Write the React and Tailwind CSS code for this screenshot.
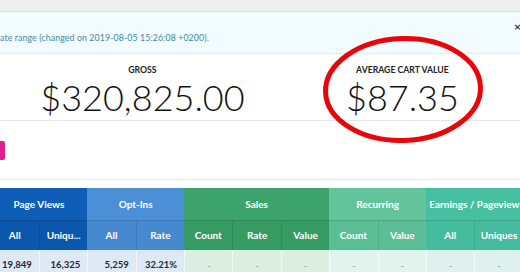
const groups = [
    { label: 'Page Views', head: 'bg-[#0e5eb7]', sub: 'bg-[#0b57ab]', cell: 'bg-[#dee9f5]', cols: ['All', 'Uniqu...'] },
    { label: 'Opt-Ins', head: 'bg-[#4b8fd6]', sub: 'bg-[#4789d0]', cell: 'bg-[#dee9f5]', cols: ['All', 'Rate'] },
    { label: 'Sales', head: 'bg-[#3ba36b]', sub: 'bg-[#369b63]', cell: 'bg-[#dbefe2]', cols: ['Count', 'Rate', 'Value'] },
    { label: 'Recurring', head: 'bg-[#63c49c]', sub: 'bg-[#5cbe96]', cell: 'bg-[#e1f3ed]', cols: ['Count', 'Value'] },
    { label: 'Earnings / Pageview', head: 'bg-[#46c0a0]', sub: 'bg-[#43bb9c]', cell: 'bg-[#dff1ec]', cols: ['All', 'Uniques'] },
];

const values = [['19,849', '16,325'], ['5,259', '32.21%'], ['-', '-', '-'], ['-', '-'], ['-', '-']];

const App = () => {
    return (
        <div className="relative w-[520px] h-[272px] overflow-hidden bg-white" style={{ fontFamily: 'Lato, "Open Sans", sans-serif' }}>
            {/* top bar */}
            <div className="h-[12px] bg-[#efefef] border-b border-[#cfe2e6]" />

            {/* alert */}
            <div className="h-[42px] bg-[#f2fbfd] border-b border-[#e3eff1] flex items-end pb-[10px] relative">
                <p className="ml-[-5px] text-[8.8px] leading-none text-[#3f8b9e] whitespace-nowrap tracking-[0.1px]">
                    date range (changed on 2019-08-05 15:26:08 +0200).
                </p>
                <span className="absolute right-[-1px] top-[9px] text-[12px] font-bold leading-none text-[#1d3e5c]">×</span>
            </div>

            {/* stats */}
            <div className="h-[67px] flex border-b border-[#e6e6e6]">
                <div className="w-[286px] flex flex-col items-center pt-[12px]">
                    <span className="text-[8.7px] leading-none text-[#222] font-bold">GROSS</span>
                    <span className="text-[36px] leading-none mt-[4px] text-[#111] font-light">$320,825.00</span>
                </div>
                <div className="w-[236px] flex flex-col items-center pt-[12px]">
                    <span className="text-[8.7px] leading-none text-[#222] font-bold">AVERAGE CART VALUE</span>
                    <span className="text-[36px] leading-none mt-[4px] text-[#111] font-light">$87.35</span>
                </div>
            </div>

            {/* filter bar */}
            <div className="h-[59px] border-b border-[#e6e6e6] flex items-center">
                <div className="w-[5px] h-[19px] bg-[#e0208e] rounded-r-[2px]" />
            </div>

            {/* table */}
            <div className="mt-[8px] ml-[-9.5px] flex text-white font-bold text-[10px]">
                {groups.map((g, gi) => (
                    <div key={g.label} className="flex flex-col">
                        <div className={`${g.head} h-[32px] w-full overflow-hidden flex items-center justify-center whitespace-nowrap`}>{g.label}</div>
                        <div className="flex">
                            {g.cols.map((c, ci) => (
                                <div key={ci} className="w-[48.4px] flex flex-col">
                                    <div className={`${g.sub} h-[30px] flex items-center justify-center border-t border-black/10 ${ci > 0 ? 'border-l' : ''} whitespace-nowrap`}>{c}</div>
                                    <div className={`${g.cell} h-[30px] flex items-center ${values[gi][ci] === '-' ? 'justify-center text-[#999] font-normal' : 'justify-end pr-[7px] text-[#1e2a36] text-[9.5px]'} border-l border-white/60`}>
                                        {values[gi][ci]}
                                    </div>
                                </div>
                            ))}
                        </div>
                    </div>
                ))}
            </div>

            {/* red circle annotation */}
            <svg className="absolute left-0 top-0 pointer-events-none" width="520" height="272" viewBox="0 0 520 272">
                <ellipse cx="403" cy="89.5" rx="77.5" ry="51" fill="none" stroke="#e8060b" strokeWidth="5" transform="rotate(-2 403 89.5)" />
            </svg>
        </div>
    );
};

export default App;
